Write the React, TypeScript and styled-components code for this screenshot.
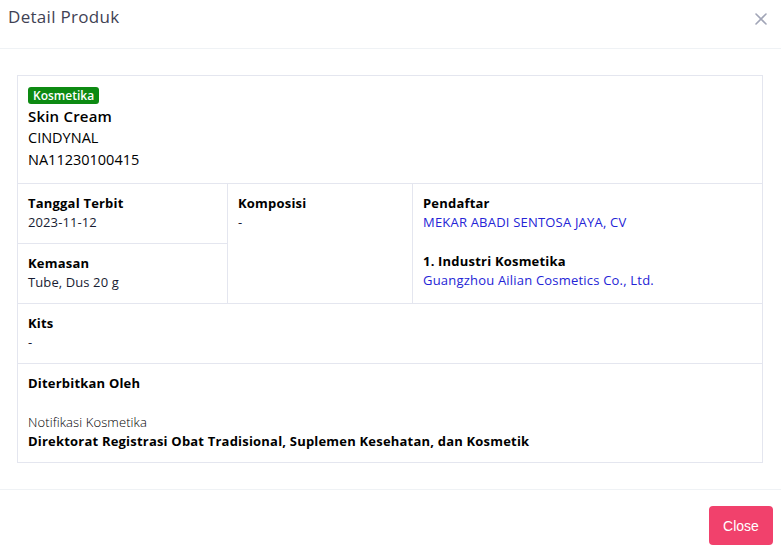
import React from "react";
import styled, { createGlobalStyle } from "styled-components";

const Global = createGlobalStyle`
  html, body { margin: 0; padding: 0; background: #fff; }
  body { font-family: "Open Sans", "Noto Sans", sans-serif; color: #181c32; }
  * { box-sizing: border-box; }
`;

const Modal = styled.div`
  width: 781px;
  height: 550px;
  display: flex;
  flex-direction: column;
  background: #fff;
`;

const Header = styled.div`
  height: 49px;
  display: flex;
  align-items: flex-start;
  justify-content: space-between;
  padding: 5px 13px 0 8px;
  border-bottom: 1px solid #eff2f5;
`;

const Title = styled.h5`
  margin: 0;
  font-size: 17px;
  font-weight: 500;
  letter-spacing: 0.3px;
  color: #3f4254;
  line-height: 24px;
`;

const CloseX = styled.button`
  border: none;
  background: transparent;
  padding: 0;
  margin-top: 7px;
  width: 14px;
  height: 14px;
  display: flex;
  cursor: pointer;
`;

const Body = styled.div`
  padding: 26px 18px 26px 17px;
  border-bottom: 1px solid #eff2f5;
`;

const Table = styled.div`
  border: 1px solid #e4e6ef;
  display: grid;
  grid-template-columns: 210px 185px 1fr;
`;

const Cell = styled.div<{ $col?: string; $row?: string; $h?: number; $noBottom?: boolean }>`
  grid-column: ${(p) => p.$col || "auto"};
  grid-row: ${(p) => p.$row || "auto"};
  min-height: ${(p) => p.$h || 0}px;
  padding: 10px 10px;
  border-bottom: ${(p) => (p.$noBottom ? "none" : "1px solid #e4e6ef")};
  border-right: 1px solid #e4e6ef;
  font-size: 13px;
  line-height: 19px;
`;

const WideCell = styled(Cell)`
  border-right: none;
`;

const Badge = styled.span`
  display: inline-block;
  background: #0d8a12;
  color: #fff;
  font-size: 12px;
  line-height: 17px;
  padding: 0 5px;
  border-radius: 3px;
  font-weight: 600;
  margin-top: 1px;
`;

const ProductName = styled.div<{ $bold?: boolean }>`
  font-size: ${(p) => (p.$bold ? 15 : 14.5)}px;
  line-height: 22px;
  font-weight: ${(p) => (p.$bold ? 600 : 400)};
  letter-spacing: ${(p) => (p.$bold ? 0.2 : 0)}px;
  color: #000;
`;

const Label = styled.div`
  font-weight: 700;
  color: #000;
  font-size: 13px;
  letter-spacing: 0.2px;
  line-height: 19px;
`;

const Value = styled.div<{ $light?: boolean }>`
  color: ${(p) => (p.$light ? "#000" : "#181c32")};
  font-weight: ${(p) => (p.$light ? 300 : 400)};
  letter-spacing: 0.1px;
`;

const Link = styled.a`
  display: block;
  color: #2424d6;
  text-decoration: none;
  letter-spacing: 0.2px;
`;

const Group = styled.div`
  margin-bottom: 20px;
  &:last-child { margin-bottom: 0; }
`;

const Spacer = styled.div`
  height: 20px;
`;

const Footer = styled.div`
  flex: 1;
  display: flex;
  justify-content: flex-end;
  align-items: flex-start;
  padding: 16px 8px 0 0;
`;

const CloseButton = styled.button`
  background: #f1416c;
  color: #fff;
  border: none;
  border-radius: 4px;
  width: 64px;
  height: 39px;
  font-family: "Liberation Sans", Arial, sans-serif;
  font-size: 14px;
  cursor: pointer;
`;

export default function App() {
  return (
    <Modal>
      <Global />
      <Header>
        <Title>Detail Produk</Title>
        <CloseX aria-label="close">
          <svg width="14" height="14" viewBox="0 0 14 14">
            <path d="M2 2 L12 12 M12 2 L2 12" stroke="#a1a5b7" strokeWidth="1.6" strokeLinecap="round" />
          </svg>
        </CloseX>
      </Header>
      <Body>
        <Table>
          <WideCell $col="1 / 4" $h={108}>
            <Badge>Kosmetika</Badge>
            <ProductName $bold>Skin Cream</ProductName>
            <ProductName>CINDYNAL</ProductName>
            <ProductName>NA11230100415</ProductName>
          </WideCell>
          <Cell $col="1" $row="2" $h={60}>
            <Label>Tanggal Terbit</Label>
            <Value>2023-11-12</Value>
          </Cell>
          <Cell $col="2" $row="2 / 4">
            <Label>Komposisi</Label>
            <Value>-</Value>
          </Cell>
          <WideCell $col="3" $row="2 / 4">
            <Group>
              <Label>Pendaftar</Label>
              <Link>MEKAR ABADI SENTOSA JAYA, CV</Link>
            </Group>
            <Group>
              <Label>1. Industri Kosmetika</Label>
              <Link>Guangzhou Ailian Cosmetics Co., Ltd.</Link>
            </Group>
          </WideCell>
          <Cell $col="1" $row="3" $h={60}>
            <Label>Kemasan</Label>
            <Value>Tube, Dus 20 g</Value>
          </Cell>
          <WideCell $col="1 / 4" $h={60}>
            <Label>Kits</Label>
            <Value>-</Value>
          </WideCell>
          <WideCell $col="1 / 4" $h={98} $noBottom>
            <Label>Diterbitkan Oleh</Label>
            <Spacer />
            <Value $light>Notifikasi Kosmetika</Value>
            <Label>Direktorat Registrasi Obat Tradisional, Suplemen Kesehatan, dan Kosmetik</Label>
          </WideCell>
        </Table>
      </Body>
      <Footer>
        <CloseButton>Close</CloseButton>
      </Footer>
    </Modal>
  );
}
